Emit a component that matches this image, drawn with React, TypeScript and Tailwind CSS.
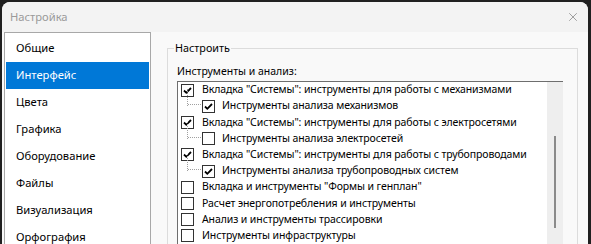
import { X } from 'lucide-react';

const sections = [
  'Общие',
  'Интерфейс',
  'Цвета',
  'Графика',
  'Оборудование',
  'Файлы',
  'Визуализация',
  'Орфография'
];

const tools = [
  { label: 'Вкладка "Системы": инструменты для работы с механизмами', checked: true },
  { label: 'Инструменты анализа механизмов', checked: true, child: true },
  { label: 'Вкладка "Системы": инструменты для работы с электросетями', checked: true },
  { label: 'Инструменты анализа электросетей', checked: false, child: true },
  { label: 'Вкладка "Системы": инструменты для работы с трубопроводами', checked: true },
  { label: 'Инструменты анализа трубопроводных систем', checked: true, child: true },
  { label: 'Вкладка и инструменты "Формы и генплан"', checked: false },
  { label: 'Расчет энергопотребления и инструменты', checked: false },
  { label: 'Анализ и инструменты трассировки', checked: false },
  { label: 'Инструменты инфраструктуры', checked: false }
];

const CheckBox = ({ checked }: { checked: boolean }) => (
  <div className="w-[13px] h-[13px] shrink-0 border border-[#333333] bg-white flex items-center justify-center">
    {checked && (
      <svg width="9" height="9" viewBox="0 0 9 9">
        <path d="M1 4.5 L3.3 6.8 L8 2" fill="none" stroke="#000" strokeWidth="1.8" />
      </svg>
    )}
  </div>
);

const App = () => {
  return (
    <div
      className="w-[591px] h-[244px] bg-[#202020] overflow-hidden pt-[2px] pl-[2px]"
      style={{ fontFamily: '"Noto Sans", "Open Sans", sans-serif' }}
    >
      <div className="w-[586px] h-[260px] rounded-t-[8px] bg-[#f9f9f9] overflow-hidden">
        {/* Title bar */}
        <div className="h-[30px] bg-[#f3f3f3] flex items-center justify-between pl-[8px] pr-[8px]">
          <span className="text-[11.2px] text-[#9a9a9a]">Настройка</span>
          <X className="w-[14px] h-[14px] text-[#7a7a7a]" strokeWidth={1.2} />
        </div>

        <div className="flex">
          {/* Sidebar */}
          <div className="ml-[2px] w-[147px] h-[230px] shrink-0 bg-white border border-[#a8a8a8] pt-[2px] px-[1px]">
            {sections.map((name) => (
              <div
                key={name}
                className={`h-[27px] flex items-center pl-[10px] text-[11.2px] ${
                  name === 'Интерфейс' ? 'bg-[#0078d7] text-white' : 'text-black'
                }`}
              >
                {name}
              </div>
            ))}
          </div>

          {/* Content */}
          <div className="pl-[16px] pt-[16px]">
            <div className="relative w-[411px] h-[220px] border border-[#dcdcdc]">
              <span className="absolute -top-[9px] left-[6px] bg-[#f9f9f9] px-[1px] text-[10.8px] text-black leading-[16px]">
                Настроить
              </span>
              <div className="pl-[9px] pt-[14px]">
                <div className="text-[10.5px] leading-[16px] text-black">Инструменты и анализ:</div>
                <div className="mt-[2px] w-[386px] h-[170px] bg-white border-t border-l border-[#6e6e6e] flex">
                  <div className="flex-1 min-w-0 overflow-hidden">
                    {tools.map((t, i) => (
                      <div
                        key={i}
                        className="h-[16.2px] flex items-center text-[10.5px] tracking-[-0.1px] text-black whitespace-nowrap"
                      >
                        {t.child ? (
                          <div className="relative flex items-center pl-[24px]">
                            <div className="absolute left-[9px] -top-[9px] h-[17px] border-l border-dotted border-[#a0a0a0]" />
                            <div className="absolute left-[10px] top-[6px] w-[13px] border-t border-dotted border-[#a0a0a0]" />
                            <CheckBox checked={t.checked} />
                            <span className="ml-[7px]">{t.label}</span>
                          </div>
                        ) : (
                          <div className="flex items-center pl-[3px]">
                            <CheckBox checked={t.checked} />
                            <span className="ml-[8px]">{t.label}</span>
                          </div>
                        )}
                      </div>
                    ))}
                  </div>
                  <div className="w-[16px] shrink-0 bg-[#eeeeee] pt-[54px] flex justify-center">
                    <div className="w-[2px] h-[92px] bg-[#8a8a8a]" />
                  </div>
                </div>
              </div>
            </div>
          </div>
        </div>
      </div>
    </div>
  );
};

export default App;
